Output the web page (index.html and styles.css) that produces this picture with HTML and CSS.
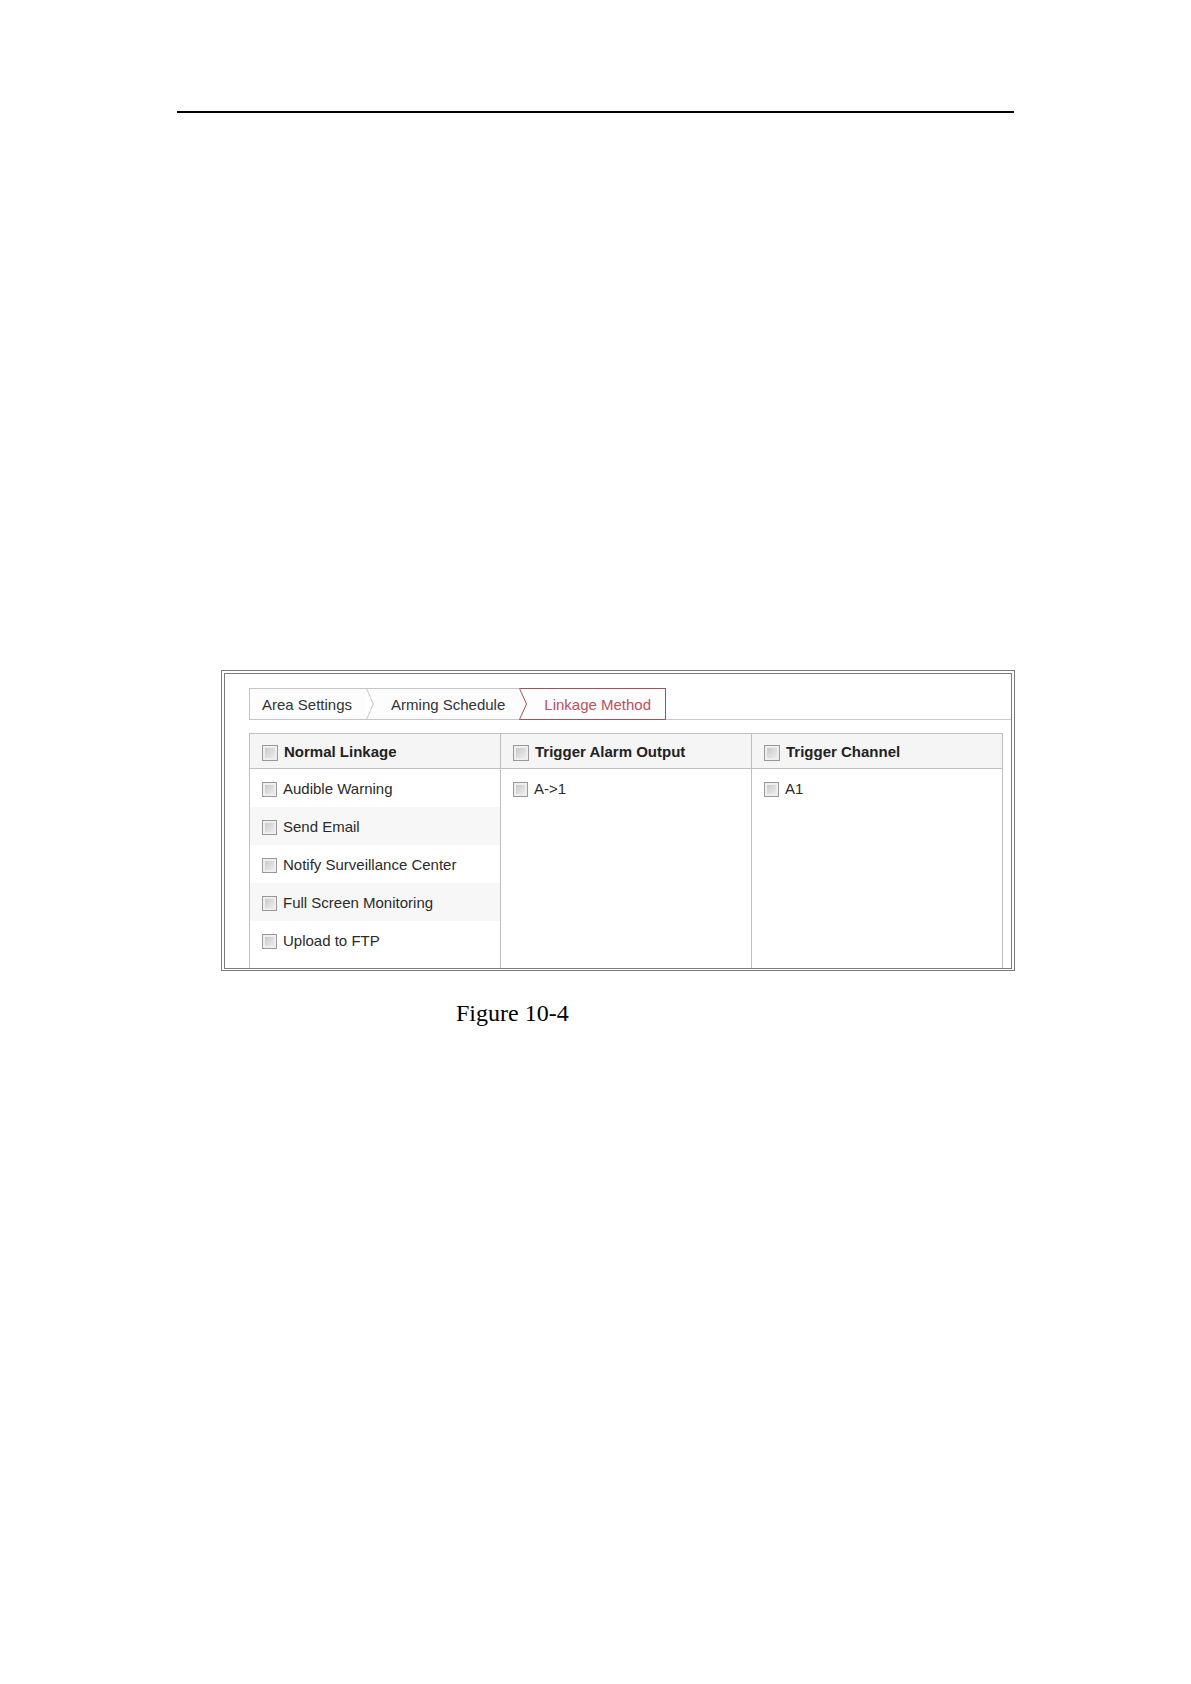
FILE: index.html
```html
<!DOCTYPE html>
<html lang="en">

<head>
    <meta charset="UTF-8">
    <meta name="viewport" content="width=device-width, initial-scale=1.0">
    <title>Linkage Method</title>
    <link rel="stylesheet" href="styles.css">
</head>

<body>
    <header class="page-header"></header>

    <main class="page">
        <figure class="figure">
            <div class="frame">
                <div class="panel">
                    <nav class="tabs">
                        <button class="tab first" type="button">Area Settings</button>
                        <svg class="chevron" width="8" height="32" viewBox="0 0 8 32"><path d="M0.5 0L7.5 16L0.5 32" /></svg>
                        <button class="tab" type="button">Arming Schedule</button>
                        <svg class="chevron active" width="8" height="32" viewBox="0 0 8 32"><path d="M8 0.5H0.5L7.5 16L0.5 31.5H8" /></svg>
                        <button class="tab active" type="button">Linkage Method</button>
                    </nav>

                    <div class="columns">
                        <section class="column">
                            <label class="heading"><input type="checkbox">Normal Linkage</label>
                            <div class="options striped">
                                <label class="option"><input type="checkbox">Audible Warning</label>
                                <label class="option"><input type="checkbox">Send Email</label>
                                <label class="option"><input type="checkbox">Notify Surveillance Center</label>
                                <label class="option"><input type="checkbox">Full Screen Monitoring</label>
                                <label class="option"><input type="checkbox">Upload to FTP</label>
                            </div>
                        </section>
                        <section class="column">
                            <label class="heading"><input type="checkbox">Trigger Alarm Output</label>
                            <div class="options">
                                <label class="option"><input type="checkbox">A-&gt;1</label>
                            </div>
                        </section>
                        <section class="column">
                            <label class="heading"><input type="checkbox">Trigger Channel</label>
                            <div class="options">
                                <label class="option"><input type="checkbox">A1</label>
                            </div>
                        </section>
                    </div>
                </div>
            </div>
            <figcaption class="caption">Figure 10-4</figcaption>
        </figure>
    </main>
</body>

</html>
```

FILE: styles.css
```css
* {
    box-sizing: border-box;
}

body {
    margin: 0;
    padding: 111px 176px 0 177px;
    background-color: #fff;
    font-family: "Liberation Sans", Arial, sans-serif;
    font-size: 15px;
    color: #2a2a2a;
}

.page-header {
    border-bottom: 2px solid #000;
    margin-right: 1px;
}

.page {
    padding: 557px 0 80px 44px;
}

.figure {
    margin: 0;
}

/* Two thin lines around the panel */
.frame {
    border: 1px solid #7c7c7c;
    padding: 2px 2px 1px;
}

.panel {
    border: 1px solid #7c7c7c;
    padding: 14px 0 0 24px;
}

.tabs {
    display: flex;
    height: 32px;
    border-bottom: 1px solid #cacaca;
}

.tab {
    height: 32px;
    padding: 0 14px 0 17px;
    border: solid #c4c4c4;
    border-width: 1px 0;
    background-color: #fdfdfd;
    font-family: inherit;
    font-size: 15px;
    color: #333;
    white-space: nowrap;
    cursor: pointer;
}

.tab.first {
    padding-left: 12px;
    border-left-width: 1px;
}

.tab.active {
    border-color: #a5505a;
    border-right-width: 1px;
    color: #bd4f60;
}

.chevron {
    flex: none;
    fill: none;
    stroke: #c4c4c4;
}

.chevron.active {
    stroke: #a5505a;
}

/* The top and bottom lines run on past the grey arrow */
.chevron:not(.active) {
    border: solid #c4c4c4;
    border-width: 1px 0;
}

.columns {
    display: grid;
    grid-template-columns: repeat(3, 1fr);
    margin: 13px 8px 0 0;
    border: solid #bfbfbf;
    border-width: 1px 1px 0 0;
}

.column {
    border-left: 1px solid #bfbfbf;
}

.heading,
.option {
    display: flex;
    align-items: center;
    padding-left: 12px;
}

.heading {
    height: 35px;
    gap: 6px;
    border-bottom: 1px solid #bfbfbf;
    background-color: #f5f5f5;
    font-weight: bold;
    color: #222;
}

.option {
    height: 38px;
    gap: 6px;
}

.options {
    padding-bottom: 9px;
}

.striped .option:nth-child(even) {
    background-color: #f7f7f7;
}

input[type="checkbox"] {
    appearance: none;
    flex: none;
    width: 15px;
    height: 15px;
    margin: 3px 0 0;
    border: 1px solid #999;
    background: linear-gradient(135deg, #c2c2c2, #f4f4f4);
    box-shadow: inset 0 0 0 2px #eee;
}

.heading input[type="checkbox"] {
    width: 16px;
    height: 16px;
}

input[type="checkbox"]:checked {
    background: #a5505a;
}

.caption {
    margin-top: 28px;
    padding-left: 235px;
    font-family: "Liberation Serif", "Times New Roman", serif;
    font-size: 24px;
    line-height: 28px;
    color: #000;
}
```
